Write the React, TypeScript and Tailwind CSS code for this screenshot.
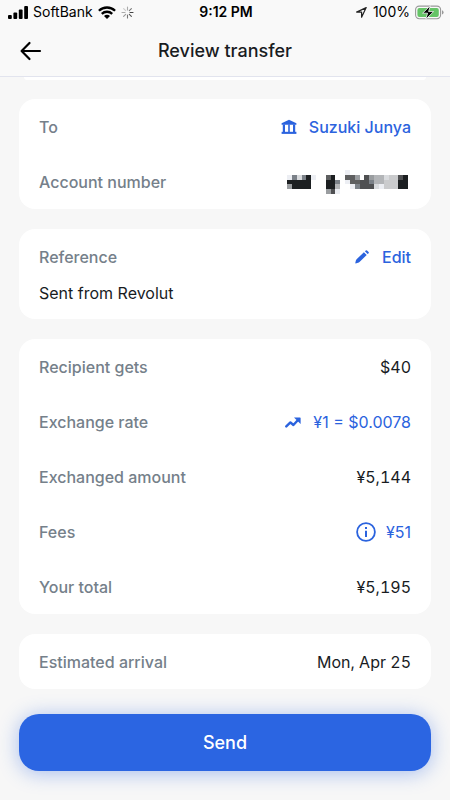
import React from 'react';

// Blurred-out account number, one character per cell, '.' is empty
const MOSAIC_COLORS: Record<string, string> = {
  a: '#1c1f21',
  b: '#4f5052',
  c: '#5e5f60',
  d: '#7b8188',
  e: '#9a9da0',
  f: '#b3b5b8',
  g: '#cacbcd',
  h: '#d9dbde',
  i: '#eceef3',
};

const MOSAIC_ROWS = [
  '............i............',
  'idhdai..ca..cce.beffhggba',
  'aaaaa...aad.iccbbdffgggaa',
  'eaaaa...aaf..idbbbhigggaa',
  '........ebi..............',
];

const MaskedNumber: React.FC = () => (
  <svg width="121" height="24" viewBox="0 0 25 5" preserveAspectRatio="none" shapeRendering="crispEdges" role="img" aria-label="Hidden account number" className="mr-[3px]">
    {MOSAIC_ROWS.map((row, y) =>
      row.split('').map((cell, x) =>
        cell === '.' ? null : <rect key={`${x}-${y}`} x={x} y={y} width="1" height="1" fill={MOSAIC_COLORS[cell]} />
      )
    )}
  </svg>
);

const BankIcon: React.FC = () => (
  <svg width="16" height="16" viewBox="0 0 16 16" fill="currentColor" aria-hidden="true">
    <path d="M8 .8 15.4 4.2V5.8H.6V4.2z" />
    <path d="M1.8 5.5h2.2V13H1.8zM7.2 5.5h1.6V13H7.2zM12 5.5h2.2V13H12z" />
    <path d="M.6 12.8h14.8v2.1H.6z" />
  </svg>
);

const PencilIcon: React.FC = () => (
  <svg width="16" height="16" viewBox="0 0 16 16" fill="currentColor" aria-hidden="true">
    <path d="M9.9 3.2 12.7 6 5.5 13Q4.9 13.6 4 13.8L1.7 14.4Q1.2 14.4 1.3 13.9L1.8 11.8Q2 10.9 2.6 10.3z" />
    <path d="M10.9 2.3 11.8 1.4Q12.4.9 13 1.4L14.6 3Q15.1 3.6 14.6 4.2L13.6 5.1z" />
  </svg>
);

const TrendIcon: React.FC = () => (
  <svg width="16" height="16" viewBox="0 0 16 16" aria-hidden="true">
    <path d="M1.3 12.4 5.4 8.4 8.4 11 13 6" fill="none" stroke="currentColor" strokeWidth="2.4" strokeLinecap="round" strokeLinejoin="round" />
    <path d="M9 3.4h5.9q.7 0 .7.7V10z" fill="currentColor" />
  </svg>
);

const InfoIcon: React.FC = () => (
  <svg width="20" height="20" viewBox="0 0 20 20" aria-hidden="true">
    <circle cx="10" cy="10" r="8.9" fill="none" stroke="currentColor" strokeWidth="1.8" />
    <path d="M9 5h2v2H9zM9 8.8h2V15H9z" fill="currentColor" />
  </svg>
);

const StatusBar: React.FC = () => (
  <div className="grid grid-cols-3 items-center h-6 pl-2 pr-1.5 text-sm text-black">
    <div className="flex items-center gap-[5px]">
      <svg width="20" height="13" viewBox="0 0 20 13" aria-hidden="true">
        <rect x="0" y="9" width="3.8" height="4" rx="1" />
        <rect x="5.4" y="6.5" width="3.8" height="6.5" rx="1" />
        <rect x="10.8" y="3.5" width="3.8" height="9.5" rx="1" />
        <rect x="16.2" y="0" width="3.8" height="13" rx="1" />
      </svg>
      <span>SoftBank</span>
      <svg width="18" height="13" viewBox="0 0 18 13" fill="none" stroke="#000" strokeWidth="2.3" aria-hidden="true">
        <path d="M.9 4.8a11.6 11.6 0 0 1 16.2 0" />
        <path d="M3.8 7.9a7.4 7.4 0 0 1 10.4 0" />
        <path d="M9 13 6 10a4.2 4.2 0 0 1 6 0z" fill="#000" stroke="none" />
      </svg>
      <svg width="13" height="13" viewBox="0 0 13 13" strokeWidth="1.1" strokeLinecap="round" aria-hidden="true">
        <path d="M6.5 4V1" stroke="#aaa" />
        <path d="M8.3 4.7l2.1-2.1" stroke="#777" />
        <path d="M9 6.5h3" stroke="#444" />
        <path d="M8.3 8.3l2.1 2.1" stroke="#555" />
        <path d="M6.5 9v3" stroke="#777" />
        <path d="M4.7 8.3l-2.1 2.1" stroke="#999" />
        <path d="M4 6.5H1" stroke="#aaa" />
        <path d="M4.7 4.7 2.6 2.6" stroke="#ccc" />
      </svg>
    </div>
    <span className="text-center font-semibold">9:12 PM</span>
    <div className="flex items-center justify-end gap-[5px]">
      <svg width="13" height="13" viewBox="0 0 13 13" fill="none" stroke="#222" strokeWidth="1.2" strokeLinejoin="round" aria-hidden="true">
        <path d="M11.2 1.6 1.6 6.1H6.6V11.2z" />
      </svg>
      <span>100%</span>
      <svg width="29" height="15" viewBox="0 0 29 15" aria-hidden="true">
        <rect x=".6" y="1.1" width="25" height="12.6" rx="3.6" fill="none" stroke="#999" strokeWidth="1.1" />
        <rect x="2.4" y="2.9" width="21.4" height="9" rx="2" fill="#65c466" />
        <path d="M27 5.2q1.6.6 1.6 2.2T27 9.6z" fill="#999" />
        <path d="M15.4.6 7.6 8.2h5L10.6 14.4 18.6 6.6h-5z" stroke="#f8f8f8" strokeWidth=".8" />
      </svg>
    </div>
  </div>
);

interface RowProps {
  label: string;
  children: React.ReactNode;
}

const Row: React.FC<RowProps> = ({ label, children }) => (
  <div className="flex items-center justify-between h-[55px]">
    <dt className="font-medium text-[#75808a]">{label}</dt>
    <dd className="flex items-center tabular-nums">{children}</dd>
  </div>
);

const Card: React.FC<{ children: React.ReactNode }> = ({ children }) => (
  <dl className="px-5 bg-white rounded-2xl">{children}</dl>
);

const App: React.FC = () => {
  return (
    <div className="min-h-screen bg-[#f7f7f7] text-base text-[#191c1f] font-['Inter',sans-serif]">
      <header className="bg-[#f9f9f9] border-b border-[#e2e4ee]">
        <StatusBar />
        <div className="relative flex items-center justify-center h-[52px] pt-px">
          <button type="button" aria-label="Back" className="absolute left-5 p-0">
            <svg width="22" height="20" viewBox="0 0 22 20" fill="none" stroke="#000" strokeWidth="2.2" strokeLinecap="round" strokeLinejoin="round" aria-hidden="true">
              <path d="M9.5 2 1.6 10l7.9 8M1.8 10H20" />
            </svg>
          </button>
          <h1 className="text-lg font-medium">Review transfer</h1>
        </div>
      </header>

      {/* Bottom edge of the card scrolled under the header */}
      <div className="h-[3px] mx-6 bg-white rounded-b-full" />

      <main className="flex flex-col gap-5 px-[19px] pt-[19px]">
        <Card>
          <Row label="To">
            <a href="#recipient" className="flex items-center gap-3 font-medium text-[#2b63de]">
              <BankIcon />
              Suzuki Junya
            </a>
          </Row>
          <Row label="Account number">
            <MaskedNumber />
          </Row>
        </Card>

        <Card>
          <Row label="Reference">
            <button type="button" className="flex items-center gap-3 font-medium text-[#2b63de]">
              <PencilIcon />
              Edit
            </button>
          </Row>
          <dd className="pb-[17px] leading-[18px]">Sent from Revolut</dd>
        </Card>

        <Card>
          <Row label="Recipient gets">$40</Row>
          <Row label="Exchange rate">
            <a href="#rate" className="flex items-center gap-3 normal-nums text-[#2b63de]">
              <TrendIcon />
              ¥1 = $0.0078
            </a>
          </Row>
          <Row label="Exchanged amount">¥5,144</Row>
          <Row label="Fees">
            <a href="#fees" className="flex items-center gap-2.5 normal-nums text-[#2b63de]">
              <InfoIcon />
              ¥51
            </a>
          </Row>
          <Row label="Your total">¥5,195</Row>
        </Card>

        <Card>
          <Row label="Estimated arrival">Mon, Apr 25</Row>
        </Card>
      </main>

      <footer className="px-[19px] pt-[25px] pb-7">
        <button type="button" className="w-full h-[57px] rounded-[20px] bg-[#2b65e2] text-lg font-medium text-white shadow-[0_2px_20px_rgba(43,101,226,0.4)]">
          Send
        </button>
      </footer>
    </div>
  );
};

export default App;
